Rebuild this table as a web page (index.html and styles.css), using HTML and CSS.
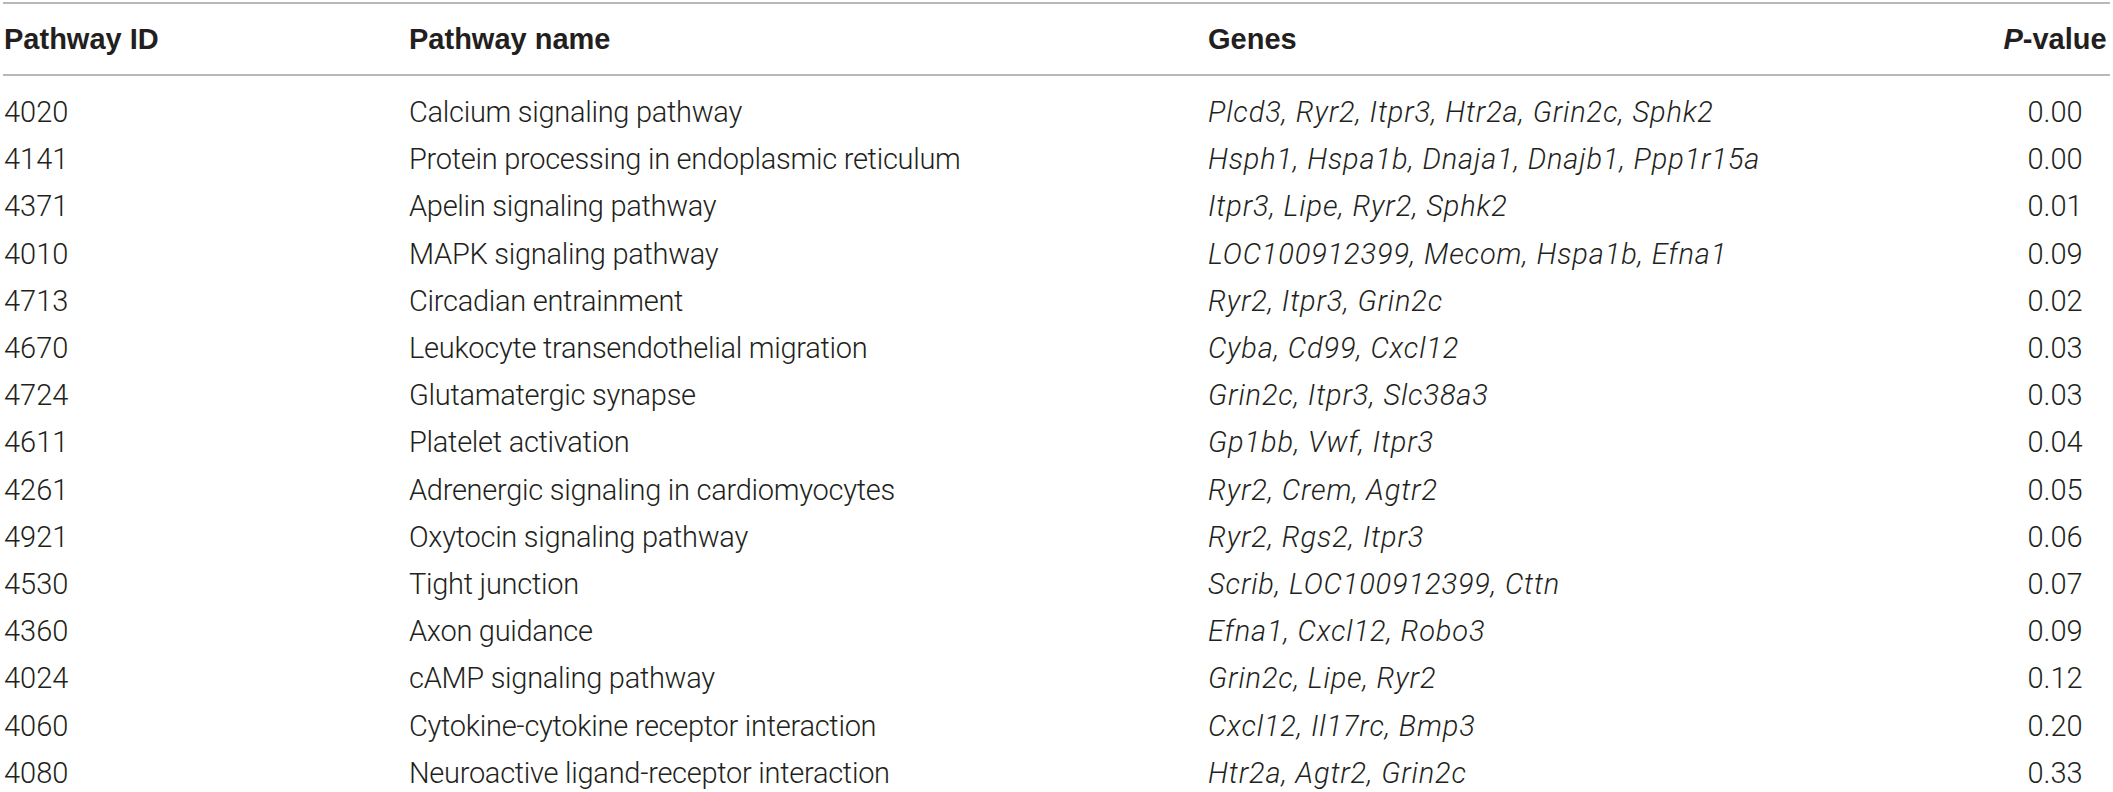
FILE: index.html
```html
<!DOCTYPE html>
<html lang="en">
<head>
<meta charset="utf-8">
<title>Pathways</title>
<link rel="stylesheet" href="styles.css">
</head>
<body>
<div class="wrap">
<table class="pt">
  <colgroup>
    <col class="c-id"><col class="c-name"><col class="c-genes"><col class="c-p">
  </colgroup>
  <thead>
    <tr><th>Pathway ID</th><th>Pathway name</th><th>Genes</th><th class="pv"><i>P</i>-value</th></tr>
  </thead>
  <tbody>
    <tr class="first"><td>4020</td><td class="n">Calcium signaling pathway</td><td class="g">Plcd3, Ryr2, Itpr3, Htr2a, Grin2c, Sphk2</td><td class="pv">0.00</td></tr>
    <tr><td>4141</td><td class="n">Protein processing in endoplasmic reticulum</td><td class="g">Hsph1, Hspa1b, Dnaja1, Dnajb1, Ppp1r15a</td><td class="pv">0.00</td></tr>
    <tr><td>4371</td><td class="n">Apelin signaling pathway</td><td class="g">Itpr3, Lipe, Ryr2, Sphk2</td><td class="pv">0.01</td></tr>
    <tr><td>4010</td><td class="n">MAPK signaling pathway</td><td class="g">LOC100912399, Mecom, Hspa1b, Efna1</td><td class="pv">0.09</td></tr>
    <tr><td>4713</td><td class="n">Circadian entrainment</td><td class="g">Ryr2, Itpr3, Grin2c</td><td class="pv">0.02</td></tr>
    <tr><td>4670</td><td class="n">Leukocyte transendothelial migration</td><td class="g">Cyba, Cd99, Cxcl12</td><td class="pv">0.03</td></tr>
    <tr><td>4724</td><td class="n">Glutamatergic synapse</td><td class="g">Grin2c, Itpr3, Slc38a3</td><td class="pv">0.03</td></tr>
    <tr><td>4611</td><td class="n">Platelet activation</td><td class="g">Gp1bb, Vwf, Itpr3</td><td class="pv">0.04</td></tr>
    <tr><td>4261</td><td class="n">Adrenergic signaling in cardiomyocytes</td><td class="g">Ryr2, Crem, Agtr2</td><td class="pv">0.05</td></tr>
    <tr><td>4921</td><td class="n">Oxytocin signaling pathway</td><td class="g">Ryr2, Rgs2, Itpr3</td><td class="pv">0.06</td></tr>
    <tr><td>4530</td><td class="n">Tight junction</td><td class="g">Scrib, LOC100912399, Cttn</td><td class="pv">0.07</td></tr>
    <tr><td>4360</td><td class="n">Axon guidance</td><td class="g">Efna1, Cxcl12, Robo3</td><td class="pv">0.09</td></tr>
    <tr><td>4024</td><td class="n">cAMP signaling pathway</td><td class="g">Grin2c, Lipe, Ryr2</td><td class="pv">0.12</td></tr>
    <tr><td>4060</td><td class="n">Cytokine-cytokine receptor interaction</td><td class="g">Cxcl12, Il17rc, Bmp3</td><td class="pv">0.20</td></tr>
    <tr><td>4080</td><td class="n">Neuroactive ligand-receptor interaction</td><td class="g">Htr2a, Agtr2, Grin2c</td><td class="pv">0.33</td></tr>
  </tbody>
</table>
</div>
</body>
</html>
```

FILE: styles.css
```css
html, body {
  margin: 0;
  padding: 0;
  background: #ffffff;
  overflow: hidden;
}
.wrap {
  padding: 2px 3px 0 3px;
}
.pt {
  width: 2107px;
  border-collapse: collapse;
  table-layout: fixed;
  color: #231f20;
  font-family: Roboto, "Liberation Sans", Arial, sans-serif;
  font-weight: 300;
  font-size: 29px;
}
.c-id { width: 405px; }
.c-name { width: 799px; }
.c-genes { width: 793px; }
.c-p { width: 110px; }
.pt thead th {
  font-family: "Liberation Sans", Arial, sans-serif;
  font-weight: 700;
  text-align: left;
  line-height: 34px;
  padding: 18px 0 18px 1px;
  border-top: 2px solid #b8b8b8;
  border-bottom: 2px solid #b8b8b8;
  white-space: nowrap;
}
.pt thead th.pv { text-align: center; padding-left: 0; }
.pt thead th i { font-style: italic; }
.pt td {
  padding: 0 0 0 1px;
  height: 47.2px;
  line-height: 47.2px;
  white-space: nowrap;
  vertical-align: top;
}
.pt tr.first td { padding-top: 13px; }
.pt td.n { letter-spacing: -0.28px; }
.pt td.g { font-style: italic; letter-spacing: 0.85px; }
.pt td.pv { text-align: center; padding-left: 0; }
```
